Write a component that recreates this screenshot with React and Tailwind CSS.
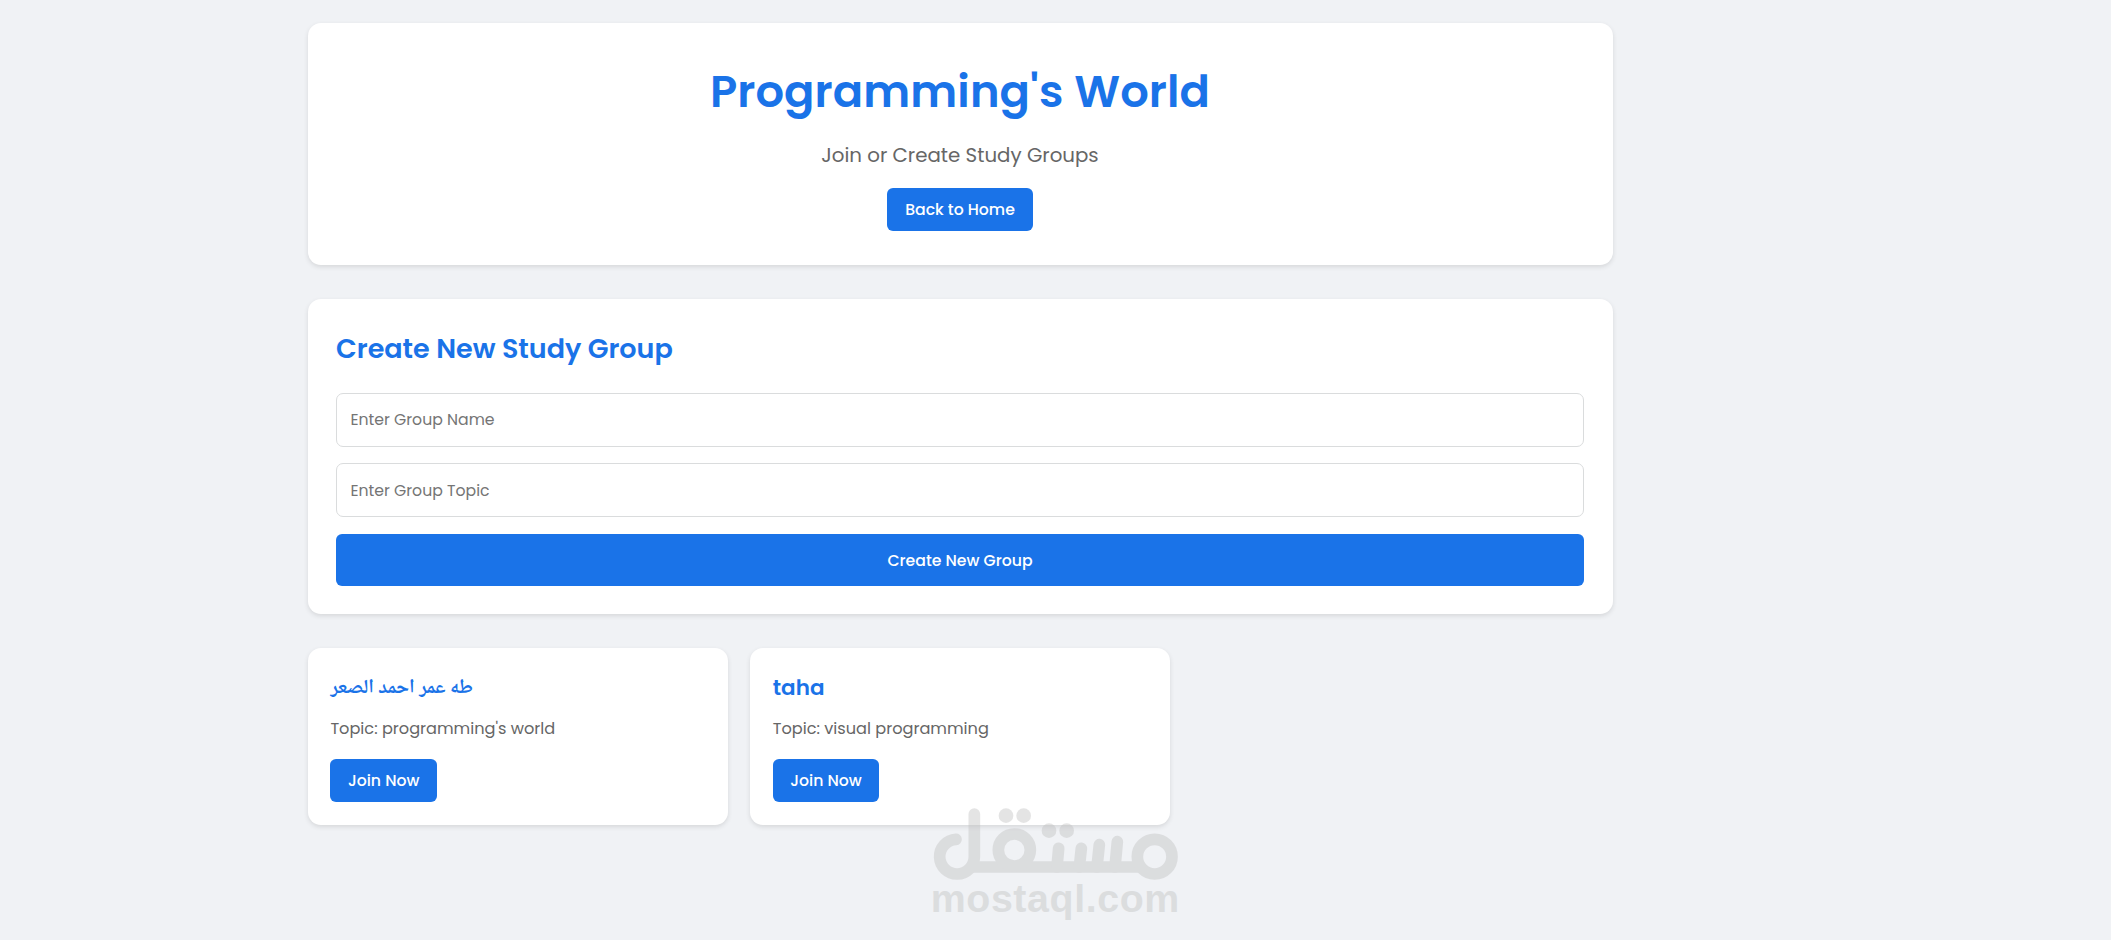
import { useState } from 'react';

const GROUPS = [
    { id: 1, name: 'طه عمر احمد الصعر', topic: "programming's world", rtl: true },
    { id: 2, name: 'taha', topic: 'visual programming' },
];

const CARD = 'bg-white rounded-[13px] shadow-[0_2px_5px_rgba(0,0,0,0.11)]';
const INPUT = 'block w-full h-[54px] px-[13.5px] border border-[#dadcdd] rounded-[7px] text-[15.7px] placeholder:text-[#757575] outline-none';

function Header() {
    return (
        <header className={`${CARD} h-[242px] flex flex-col items-center pt-[35px] pr-px`}>
            <h1 className="h-[68px] leading-[68px] text-[44.8px] font-semibold tracking-[0.1px] text-[#1a73e8]">
                Programming's World
            </h1>
            <p className="mt-[13px] h-[32px] leading-[32px] text-[19.8px] text-[#666666]">
                Join or Create Study Groups
            </p>
            <button className="mt-[17px] w-[146px] h-[43px] rounded-[6px] bg-[#1a73e8] text-[15.7px] font-medium text-white">
                Back to Home
            </button>
        </header>
    );
}

function CreateGroup() {
    const [name, setName] = useState('');
    const [topic, setTopic] = useState('');

    return (
        <section className={`${CARD} h-[315px] mt-[34px] pl-[28px] pr-[29px] pt-[28px]`}>
            <h2 className="h-[44px] leading-[44px] text-[27px] font-semibold text-[#1a73e8]">
                Create New Study Group
            </h2>
            <form className="mt-[22px]" onSubmit={(e) => e.preventDefault()}>
                <input className={`${INPUT} pb-[2px]`} value={name} onChange={(e) => setName(e.target.value)} placeholder="Enter Group Name" />
                <input className={`${INPUT} mt-[16px]`} value={topic} onChange={(e) => setTopic(e.target.value)} placeholder="Enter Group Topic" />
                <button className="mt-[17px] w-full h-[52px] rounded-[6px] bg-[#1a73e8] pt-px text-[15.7px] font-medium text-white">
                    Create New Group
                </button>
            </form>
        </section>
    );
}

function GroupCard({ group }) {
    return (
        <article className={`${CARD} h-[177px] px-[22.4px] pt-[23px]`}>
            <h3 className="h-[34px] leading-[34px] text-[21.5px] font-semibold text-[#1a73e8]">
                {group.rtl ? (
                    <bdi className="inline-block -translate-y-[2px] text-[19.9px] font-['Noto_Naskh_Arabic','Liberation_Serif',serif] font-bold">{group.name}</bdi>
                ) : group.name}
            </h3>
            <p className="mt-[11px] h-[26px] leading-[26px] text-[16.15px] text-[#666666]">Topic: {group.topic}</p>
            <button className="mt-[17px] w-[106.5px] h-[43px] rounded-[6px] bg-[#1a73e8] text-[15.7px] font-medium text-white">
                Join Now
            </button>
        </article>
    );
}

function Watermark() {
    return (
        <svg className="absolute left-[910px] top-[790px] w-[290px] h-[140px] pointer-events-none opacity-40" viewBox="0 0 870 420">
            <g fill="none" stroke="#bebebe" strokeWidth="35" strokeLinecap="round">
                <path d="M138 148 A52 52 0 1 0 193 200 V72" />
                <path d="M180 231 H700" strokeLinecap="butt" />
                <circle cx="313" cy="180" r="48" />
                <circle cx="734" cy="200" r="52" />
                <path d="M441 231 L446 175 M508 231 L514 175 M561 231 L568 164 M615 231 L622 155" />
            </g>
            <g fill="#bebebe">
                <circle cx="288" cy="77" r="22" />
                <circle cx="341" cy="77" r="22" />
                <circle cx="417" cy="122" r="22" />
                <circle cx="470" cy="122" r="22" />
                <text x="62" y="367" textLength="746" className="font-['Liberation_Sans',sans-serif] font-bold text-[118px]">mostaql.com</text>
            </g>
        </svg>
    );
}

export default function App() {
    return (
        <div className="relative min-h-[940px] bg-[#f0f2f5] font-['Poppins','Inter',sans-serif]">
            <main className="w-[1305px] ml-[308px] pt-[23px]">
                <Header />
                <CreateGroup />
                <div className="mt-[34px] grid grid-cols-[420px_420px_420px] gap-[22.4px]">
                    {GROUPS.map((g) => <GroupCard key={g.id} group={g} />)}
                </div>
            </main>
            <Watermark />
        </div>
    );
}
